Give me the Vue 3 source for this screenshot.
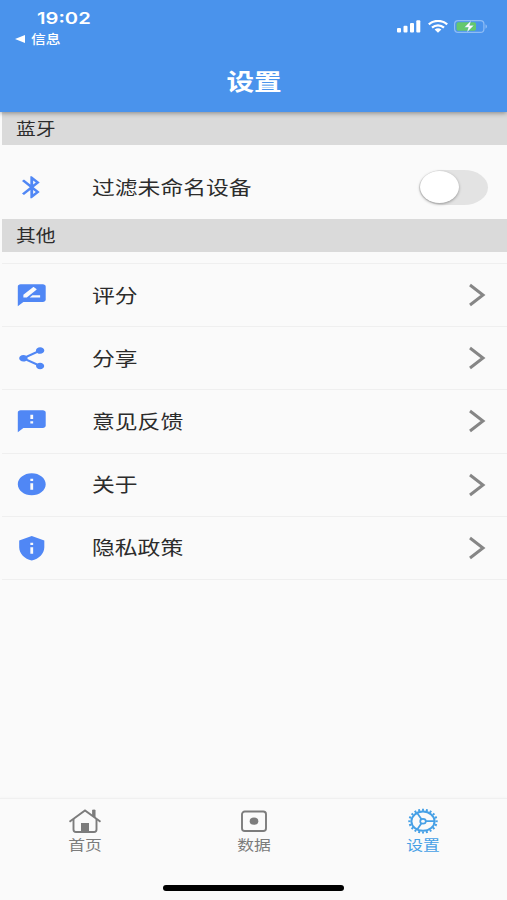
<template>
    <div class="settings-view">
        <header class="app-header">
            <div class="status-bar">
                <div class="status-left">
                    <div class="clock"><span class="wide">19:02</span></div>
                    <div class="back-app">
                        <svg width="10" height="8" viewBox="0 0 10 8"><path d="M0 4L10 0v8z" fill="#fff" /></svg>
                        <span class="wide">信息</span>
                    </div>
                </div>
                <div class="status-icons">
                    <svg width="24" height="13" viewBox="0 0 24 13" fill="#fff">
                        <rect x="0" y="8" width="4" height="4.5" rx="1" />
                        <rect x="6.5" y="5.8" width="4" height="6.7" rx="1" />
                        <rect x="13" y="3" width="4" height="9.5" rx="1" />
                        <rect x="19.3" y="0.3" width="4" height="12.2" rx="1" />
                    </svg>
                    <svg width="20" height="13" viewBox="0 0 20 13" fill="none" stroke="#fff" stroke-width="2.3">
                        <path d="M.8 4.4C6-.2 14-.2 19.2 4.4" />
                        <path d="M4 7.700c3.400-3 8.600-3 12 0" />
                        <path d="M6.600 9.400c2-1.500 4.800-1.500 6.800 0L10 12.800z" fill="#fff" stroke="none" />
                    </svg>
                    <svg width="34" height="13" viewBox="0 0 34 13">
                        <rect x="0.6" y="0.6" width="29.3" height="11.8" rx="3.5" fill="none" stroke="#8fbdf5" stroke-width="1.2" />
                        <rect x="2.5" y="2.2" width="19.5" height="8.6" rx="1.8" fill="#65c86d" />
                        <path d="M31.5 4.3c2 .8 2 3.6 0 4.4z" fill="#8fbdf5" />
                        <path d="M17 .8L10.500 7.300h4L13 12.200l6.700-6.600h-4.200z" fill="#fff" stroke="#4a93ec" stroke-width=".2" />
                    </svg>
                </div>
            </div>
            <h1><span class="wide">设置</span></h1>
        </header>

        <main class="content">
            <div class="section-title"><span class="wide">蓝牙</span></div>
            <div class="row filter-row">
                <svg class="row-icon" viewBox="0 0 24 24" preserveAspectRatio="none"><path :d="bluetoothIcon" /></svg>
                <span class="row-label"><span class="wide">过滤未命名设备</span></span>
                <button class="switch" :class="{ on: filterUnnamed }" @click="filterUnnamed = !filterUnnamed">
                    <span class="knob"></span>
                </button>
            </div>

            <div class="section-title"><span class="wide">其他</span></div>
            <div class="list">
                <div v-for="item in items" :key="item.label" class="row list-row">
                    <svg class="row-icon" viewBox="0 0 24 24" preserveAspectRatio="none"><path :d="item.icon" /></svg>
                    <span class="row-label"><span class="wide">{{ item.label }}</span></span>
                    <svg class="chevron" width="18" height="24" viewBox="0 0 18 24">
                        <path d="M2 2l13 10L2 22" fill="none" stroke="#868686" stroke-width="3" />
                    </svg>
                </div>
            </div>
        </main>

        <!-- 底部导航 -->
        <nav class="tab-bar">
            <div class="tabs">
                <div class="tab" :class="{ active: tab === 'home' }" @click="tab = 'home'">
                    <svg width="34" height="26" viewBox="0 0 34 26" fill="none" stroke="currentColor" stroke-width="1.9">
                        <path d="M1.5 13.7L17 2.500l15.500 11.200" />
                        <path d="M5.500 11v10.500c0 1.600 1 2.500 2.500 2.500h18c1.500 0 2.500-.9 2.500-2.500V11" />
                        <path d="M24.500 2h2.600v7.500l-2.600-1.900z" fill="currentColor" stroke-width=".8" />
                        <path d="M13 24v-9h8v9z" fill="currentColor" stroke="none" />
                    </svg>
                    <span class="wide">首页</span>
                </div>
                <div class="tab" :class="{ active: tab === 'data' }" @click="tab = 'data'">
                    <svg width="34" height="26" viewBox="0 0 34 26">
                        <rect x="5" y="3.500" width="24" height="19.500" rx="2.800" fill="none" stroke="currentColor" stroke-width="1.900" />
                        <ellipse cx="17" cy="13.200" rx="4.300" ry="3.600" fill="currentColor" />
                    </svg>
                    <span class="wide">数据</span>
                </div>
                <div class="tab" :class="{ active: tab === 'settings' }" @click="tab = 'settings'">
                    <svg width="34" height="26" viewBox="0 0 34 26" fill="none" stroke="currentColor">
                        <ellipse cx="17" cy="13.200" rx="11.600" ry="9.600" stroke-width="2" />
                        <ellipse cx="17" cy="13.200" rx="13.600" ry="11.300" stroke-width="2.200" pathLength="180" stroke-dasharray="4.500 4.500" stroke-dashoffset="2.250" />
                        <ellipse cx="17" cy="13.200" rx="2.800" ry="2.400" stroke-width="1.700" />
                        <path d="M19.800 13.200H29M15.500 11.200L11 4.700M15.500 15.200L11 21.700" stroke-width="1.800" />
                    </svg>
                    <span class="wide">设置</span>
                </div>
            </div>
            <div class="home-indicator"></div>
        </nav>
    </div>
</template>

<script setup>
import { ref } from 'vue'

// 是否过滤未命名设备
const filterUnnamed = ref(false)

// 当前标签页
const tab = ref('settings')

const bluetoothIcon = 'M17.71 7.71L12 2h-1v7.590L6.410 5 5 6.410 10.590 12 5 17.590 6.410 19 11 14.410V22h1l5.710-5.710-4.300-4.290 4.300-4.290zM13 5.830l1.880 1.880L13 9.590V5.830zm1.880 10.460L13 18.170v-3.760l1.880 1.880z'

// 其他设置项
const items = [
    {
        label: '评分',
        icon: 'M20 2H4c-1.100 0-1.990.9-1.990 2L2 22l4-4h14c1.100 0 2-.9 2-2V4c0-1.100-.9-2-2-2zM6 14v-2.470l6.880-6.880c.2-.2.510-.2.710 0l1.770 1.770c.2.2.2.510 0 .71L8.470 14H6zm12 0h-7.500l2-2H18v2z'
    },
    {
        label: '分享',
        icon: 'M18 16.080c-.76 0-1.440.3-1.960.77L8.910 12.700c.05-.23.09-.46.09-.7s-.04-.47-.09-.7l7.050-4.110c.54.5 1.250.81 2.040.81 1.660 0 3-1.340 3-3s-1.340-3-3-3-3 1.340-3 3c0 .24.04.47.09.7L8.040 9.810C7.500 9.310 6.790 9 6 9c-1.660 0-3 1.340-3 3s1.340 3 3 3c.79 0 1.500-.31 2.040-.81l7.120 4.160c-.05.21-.08.43-.08.65 0 1.610 1.310 2.920 2.920 2.920s2.920-1.310 2.920-2.920-1.310-2.920-2.920-2.920z'
    },
    {
        label: '意见反馈',
        icon: 'M20 2H4c-1.100 0-1.990.9-1.990 2L2 22l4-4h14c1.100 0 2-.9 2-2V4c0-1.100-.9-2-2-2zm-7 12h-2v-2h2v2zm0-4h-2V6h2v4z'
    },
    {
        label: '关于',
        icon: 'M12 2C6.480 2 2 6.480 2 12s4.480 10 10 10 10-4.480 10-10S17.520 2 12 2zm1 15h-2v-6h2v6zm0-8h-2V7h2v2z'
    },
    {
        label: '隐私政策',
        icon: 'M12 1L3 5v6c0 5.550 3.840 10.740 9 12 5.160-1.260 9-6.450 9-12V5l-9-4zm-1 6h2v2h-2V7zm0 4h2v6h-2v-6z'
    }
]
</script>

<style>
body {
    background: #fafafa;
}
</style>

<style scoped>
.settings-view {
    display: flex;
    flex-direction: column;
    height: 900px;
    overflow: hidden;
    background: #fafafa;
    color: #2c2c2c;
    font-family: "Liberation Sans", "Noto Sans CJK SC", sans-serif;
}
.wide {
    display: inline-block;
    transform: scaleX(1.2);
    transform-origin: left center;
    white-space: nowrap;
}
.app-header {
    position: relative;
    z-index: 1;
    height: 112px;
    flex-shrink: 0;
    background: #4a93ec;
    color: #fff;
    box-shadow: 0 1px 5px rgba(0, 0, 0, 0.4);
}
.status-bar {
    display: flex;
    justify-content: space-between;
    height: 62px;
    padding: 0 19px 0 15px;
    box-sizing: border-box;
}
.clock {
    padding: 8px 0 0 22px;
    font-family: Inter, sans-serif;
    font-size: 16px;
    font-weight: 600;
    line-height: 20px;
}
.clock .wide {
    transform: scaleX(1.26);
}
.back-app {
    display: flex;
    align-items: center;
    gap: 6px;
    height: 21px;
    font-size: 12.3px;
    font-weight: 500;
}
.status-icons {
    display: flex;
    gap: 6.5px;
    padding-top: 20px;
}
h1 {
    margin: 0;
    text-align: center;
    font-size: 23px;
    line-height: 40px;
    font-weight: 700;
}
h1 .wide {
    transform-origin: center;
}
.content {
    flex: 1;
}
.section-title {
    height: 33px;
    margin-left: 2px;
    padding-left: 14px;
    background: #dadada;
    font-size: 16.5px;
    line-height: 35px;
}
.row {
    display: flex;
    align-items: center;
    box-sizing: border-box;
    padding-left: 15px;
}
.filter-row {
    height: 74px;
    padding-top: 10px;
    padding-right: 19px;
}
.row-icon {
    width: 33.5px;
    height: 26.5px;
    fill: #5087f5;
    flex-shrink: 0;
}
.row-label {
    flex: 1;
    margin-left: 43px;
    padding-top: 3px;
    font-size: 19px;
    line-height: 28px;
}
.switch {
    display: flex;
    width: 69px;
    height: 35px;
    padding: 1px;
    border: 0;
    border-radius: 24px / 17.5px;
    background: #e3e3e3;
}
.switch.on {
    justify-content: flex-end;
    background: #5087f5;
}
.knob {
    width: 39px;
    height: 32px;
    border-radius: 50%;
    background: #fff;
    box-shadow: 0 1px 3px rgba(0, 0, 0, 0.35);
}
.list {
    margin: 11px 0 0 2px;
    border-top: 1px solid #efefef;
}
.list-row {
    height: 63.2px;
    padding-left: 13px;
    padding-right: 21px;
    border-bottom: 1px solid #efefef;
}
.tab-bar {
    height: 102px;
    flex-shrink: 0;
    box-sizing: border-box;
    border-top: 1px solid #f0f0f0;
    box-shadow: 0 -1px 2px rgba(0, 0, 0, 0.02);
}
.tabs {
    display: flex;
    height: 86px;
}
.tab {
    display: flex;
    flex: 1;
    flex-direction: column;
    align-items: center;
    padding-top: 9px;
    color: #7c7c7c;
    font-size: 14px;
    line-height: 22px;
}
.tab .wide {
    transform-origin: center;
}
.tab.active {
    color: #46a0e6;
}
.home-indicator {
    width: 181px;
    height: 6px;
    margin: 0 auto;
    border-radius: 3px;
    background: #000;
}
</style>
